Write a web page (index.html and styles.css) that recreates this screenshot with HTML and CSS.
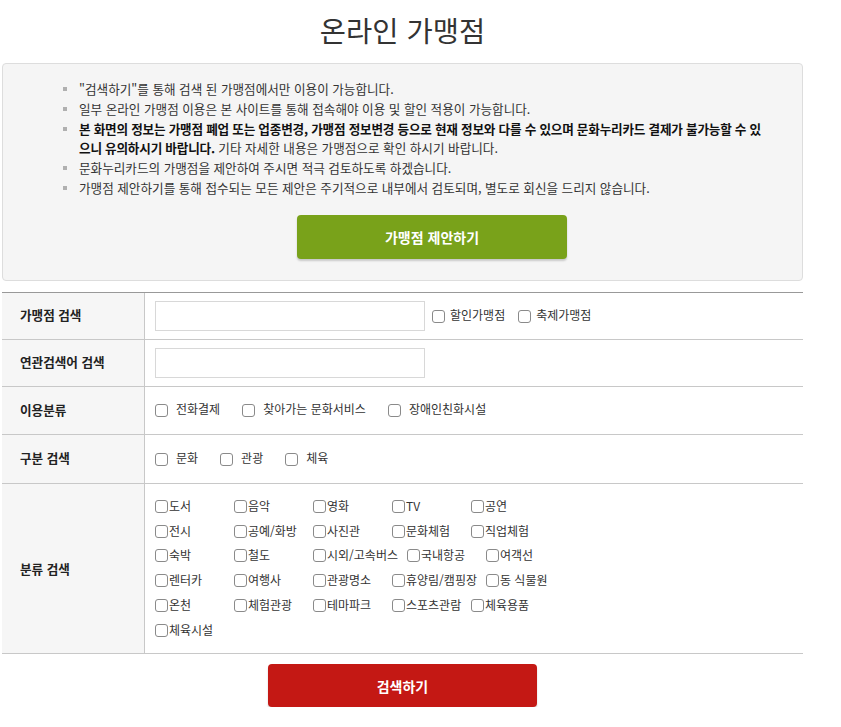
FILE: index.html
```html
<!DOCTYPE html>
<html lang="ko">
<head>
<meta charset="utf-8">
<title>온라인 가맹점</title>
<link rel="stylesheet" href="styles.css">
</head>
<body>
<div class="wrap">
  <h1 class="title">온라인 가맹점</h1>

  <div class="notice">
    <ul class="notice-list">
      <li>"검색하기"를 통해 검색 된 가맹점에서만 이용이 가능합니다.</li>
      <li>일부 온라인 가맹점 이용은 본 사이트를 통해 접속해야 이용 및 할인 적용이 가능합니다.</li>
      <li><strong>본 화면의 정보는 가맹점 폐업 또는 업종변경, 가맹점 정보변경 등으로 현재 정보와 다를 수 있으며 문화누리카드 결제가 불가능할 수 있으니 유의하시기 바랍니다.</strong> 기타 자세한 내용은 가맹점으로 확인 하시기 바랍니다.</li>
      <li>문화누리카드의 가맹점을 제안하여 주시면 적극 검토하도록 하겠습니다.</li>
      <li>가맹점 제안하기를 통해 접수되는 모든 제안은 주기적으로 내부에서 검토되며, 별도로 회신을 드리지 않습니다.</li>
    </ul>
    <div class="notice-action">
      <button class="btn btn-green" type="button">가맹점 제안하기</button>
    </div>
  </div>

  <div class="search-table">
    <div class="row row-1">
      <div class="label">가맹점 검색</div>
      <div class="cell">
        <input class="text-input" type="text">
        <label class="chk chk-tight"><input type="checkbox"><span>할인가맹점</span></label>
        <label class="chk chk-tight"><input type="checkbox"><span>축제가맹점</span></label>
      </div>
    </div>
    <div class="row row-2">
      <div class="label">연관검색어 검색</div>
      <div class="cell">
        <input class="text-input" type="text">
      </div>
    </div>
    <div class="row row-use">
      <div class="label">이용분류</div>
      <div class="cell">
        <label class="chk chk-wide"><input type="checkbox"><span>전화결제</span></label>
        <label class="chk chk-wide"><input type="checkbox"><span>찾아가는 문화서비스</span></label>
        <label class="chk chk-wide"><input type="checkbox"><span>장애인친화시설</span></label>
      </div>
    </div>
    <div class="row row-type">
      <div class="label">구분 검색</div>
      <div class="cell">
        <label class="chk chk-wide"><input type="checkbox"><span>문화</span></label>
        <label class="chk chk-wide"><input type="checkbox"><span>관광</span></label>
        <label class="chk chk-wide"><input type="checkbox"><span>체육</span></label>
      </div>
    </div>
    <div class="row row-cat">
      <div class="label">분류 검색</div>
      <div class="cell">
        <div class="cat-list">
          <label class="cat"><input type="checkbox"><span>도서</span></label>
          <label class="cat"><input type="checkbox"><span>음악</span></label>
          <label class="cat"><input type="checkbox"><span>영화</span></label>
          <label class="cat"><input type="checkbox"><span>TV</span></label>
          <label class="cat"><input type="checkbox"><span>공연</span></label>
          <label class="cat"><input type="checkbox"><span>전시</span></label>
          <label class="cat"><input type="checkbox"><span>공예/화방</span></label>
          <label class="cat"><input type="checkbox"><span>사진관</span></label>
          <label class="cat"><input type="checkbox"><span>문화체험</span></label>
          <label class="cat"><input type="checkbox"><span>직업체험</span></label>
          <label class="cat"><input type="checkbox"><span>숙박</span></label>
          <label class="cat"><input type="checkbox"><span>철도</span></label>
          <label class="cat"><input type="checkbox"><span>시외/고속버스</span></label>
          <label class="cat"><input type="checkbox"><span>국내항공</span></label>
          <label class="cat"><input type="checkbox"><span>여객선</span></label>
          <label class="cat"><input type="checkbox"><span>렌터카</span></label>
          <label class="cat"><input type="checkbox"><span>여행사</span></label>
          <label class="cat"><input type="checkbox"><span>관광명소</span></label>
          <label class="cat"><input type="checkbox"><span>휴양림/캠핑장</span></label>
          <label class="cat"><input type="checkbox"><span>동 식물원</span></label>
          <label class="cat"><input type="checkbox"><span>온천</span></label>
          <label class="cat"><input type="checkbox"><span>체험관광</span></label>
          <label class="cat"><input type="checkbox"><span>테마파크</span></label>
          <label class="cat"><input type="checkbox"><span>스포츠관람</span></label>
          <label class="cat"><input type="checkbox"><span>체육용품</span></label>
          <label class="cat"><input type="checkbox"><span>체육시설</span></label>
        </div>
      </div>
    </div>
  </div>

  <div class="search-action">
    <button class="btn btn-red" type="button">검색하기</button>
  </div>
</div>
</body>
</html>
```

FILE: styles.css
```css
* { box-sizing: border-box; }

html, body {
  margin: 0;
  padding: 0;
  background: #fff;
}

body {
  font-family: "Noto Sans CJK KR", "Noto Sans", "Liberation Sans", sans-serif;
  font-size: 12px;
  color: #333;
}

.wrap {
  width: 801px;
  margin-left: 2px;
}

.title {
  margin: 0;
  padding-top: 12px;
  height: 63px;
  text-align: center;
  font-size: 28.5px;
  line-height: 36px;
  font-weight: 400;
  color: #333;
}

.notice {
  background: #f5f5f5;
  border: 1px solid #ddd;
  border-radius: 4px;
  height: 218px;
  padding-top: 15px;
}

.notice-list {
  list-style: none;
  margin: 0;
  padding: 0 34px 0 76px;
  font-size: 12.6px;
  line-height: 19.8px;
}

.notice-list li {
  position: relative;
}

.notice-list li::before {
  content: "";
  position: absolute;
  left: -16px;
  top: 8px;
  width: 4px;
  height: 4px;
  background: #b0b0b0;
}

.notice-list strong {
  font-weight: 700;
  color: #111;
  letter-spacing: -0.2px;
}

.notice-action {
  display: flex;
  justify-content: center;
  padding-left: 59px;
  margin-top: 17px;
}

.btn {
  border: 0;
  border-radius: 4px;
  font-family: inherit;
  font-size: 14px;
  font-weight: 700;
  color: #fff;
  cursor: pointer;
  box-shadow: 0 2px 2px rgba(0, 0, 0, 0.18);
}

.btn-green {
  width: 270px;
  height: 44px;
  background: #79a21a;
}

.search-table {
  margin-top: 11px;
  border-top: 1px solid #999;
}

.row {
  display: grid;
  grid-template-columns: 143px 1fr;
  border-bottom: 1px solid #c8c8c8;
  height: 47px;
}

.row-use { height: 48px; }
.row-type { height: 49px; }
.row-cat { height: 170px; }

.label {
  background: #f6f6f6;
  border-right: 1px solid #c8c8c8;
  display: flex;
  align-items: center;
  padding-left: 18px;
  padding-bottom: 3px;
  font-weight: 700;
  font-size: 12.6px;
  color: #222;
}

.row-cat .label { padding-bottom: 1px; }

.cell {
  display: flex;
  align-items: center;
  padding-left: 10px;
}

.chk span { position: relative; top: -2px; }

.text-input {
  width: 270px;
  height: 30px;
  border: 1px solid #d8d8d8;
  background: #fff;
  margin: 0;
}

input[type="checkbox"] {
  appearance: none;
  -webkit-appearance: none;
  width: 13px;
  height: 13px;
  margin: 0;
  border: 1px solid #8a8a8a;
  border-radius: 3px;
  background: #fff;
  flex: none;
}

.chk {
  display: inline-flex;
  align-items: center;
}

.chk-tight { margin-left: 7px; }
.chk-tight span { margin-left: 5px; }
.chk-tight + .chk-tight { margin-left: 13px; }

.chk-wide { margin-right: 22px; }
.chk-wide span { margin-left: 8px; }

.row-cat .cell {
  align-items: flex-start;
  padding-top: 10px;
}

.cat-list {
  display: flex;
  flex-wrap: wrap;
  width: 430px;
}

.cat {
  display: inline-flex;
  align-items: center;
  min-width: 79px;
  height: 24.8px;
  padding-right: 9px;
}

.cat span { margin-left: 1px; position: relative; top: -1px; }

.search-action {
  display: flex;
  justify-content: center;
  margin-top: 10px;
}

.btn-red {
  width: 269px;
  height: 43px;
  background: #c41814;
}
```
